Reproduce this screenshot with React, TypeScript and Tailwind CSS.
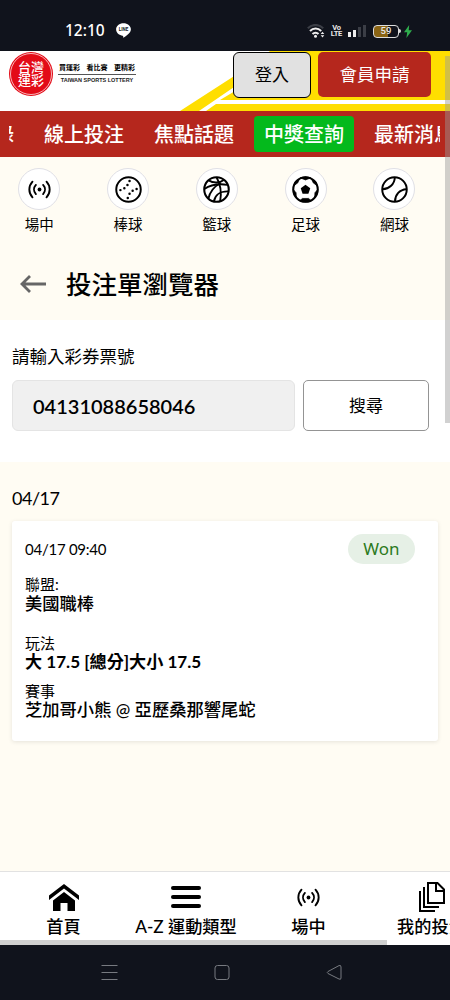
import React from 'react';

const Live: React.FC<{ className?: string }> = ({ className }) => (
  <svg viewBox="0 0 24 20" fill="none" stroke="#000" strokeWidth={2} strokeLinecap="round" className={className}>
    <circle cx="12" cy="10" r="2" fill="#000" stroke="none" />
    <path d="M8.2 5.2C5.6 8 5.6 12 8.2 14.8M15.8 5.2c2.6 2.8 2.6 6.8 0 9.6" />
    <path d="M4.6 1.8C.2 6.6 .2 13.4 4.6 18.2M19.4 1.8c4.4 4.8 4.4 11.6 0 16.4" />
  </svg>
);

const Baseball = () => (
  <svg viewBox="0 0 26 26" fill="none" stroke="#000" strokeWidth={1.9} className="size-[27px]">
    <circle cx="13" cy="13" r="11.8" />
    <path
      d="M5.2 13.6h.01M9 11.8h.01M12 8.6h.01M14 4.8h.01M20.8 12.6h.01M17 14.2h.01M14 17.2h.01M12.3 21.2h.01"
      strokeWidth={2.4}
      strokeLinecap="round"
    />
  </svg>
);

const Basketball = () => (
  <svg viewBox="0 0 26 26" fill="none" stroke="#000" strokeWidth={1.8} className="size-[27px]">
    <circle cx="13" cy="13" r="11.8" strokeWidth={2} />
    <path d="M5.5 4.2C10 7 16 6.8 20 3.8M1.3 12.5C8 8 17 7.5 23.5 8.5" />
    <path d="M13 1.2C17 8 18 16 16.5 24.5M17 6.5C11 10 6.5 15.5 5.2 21.8M10.5 24.5C11.5 18.5 16.5 14.5 24.5 14.8" />
  </svg>
);

const Soccer = () => (
  <svg viewBox="0 0 26 26" className="size-[27px]">
    <circle cx="13" cy="13" r="11.8" fill="#fff" stroke="#000" strokeWidth={2} />
    <path d="M13 8.4l4.6 3.4-1.8 5.4h-5.6l-1.8-5.4z" />
    <path
      d="M8 1.8L13 3.8l5-2L13 .8zM2 9l3.4-2.2 1.8-3.8L3 5.5zM24 9l-3.4-2.2-1.8-3.8L23 5.5zM1.2 13l2.7 3.1.2 4.2L1.6 17zM24.8 13l-2.7 3.1-.2 4.2 2.5-3.3zM7.5 23.9l2.5-2.3h6l2.5 2.3-5.5 1.2z"
      stroke="#000"
      strokeWidth={0.7}
    />
  </svg>
);

const Tennis = () => (
  <svg viewBox="0 0 26 26" fill="none" stroke="#000" strokeWidth={1.9} className="size-[27px]">
    <circle cx="13" cy="13" r="11.8" />
    <path d="M1.5 12.8C8 12.5 13 8 13.3 1.5M13.5 24.5C13.5 18 18 13 24.5 12.7" />
  </svg>
);

const sports = [
  { label: '場中', icon: <Live className="h-[19px] w-[23px]" /> },
  { label: '棒球', icon: <Baseball /> },
  { label: '籃球', icon: <Basketball /> },
  { label: '足球', icon: <Soccer /> },
  { label: '網球', icon: <Tennis /> },
];

const StatusBar = () => (
  <div className="flex h-[51px] items-end bg-[#10131c] pr-[38px] pb-[13px] pl-[65px] text-[#e8e8e8]">
    <span className="w-[39px] font-['Noto_Sans',sans-serif] text-[15.5px] leading-[16px] font-medium whitespace-nowrap text-white">12:10</span>
    <svg viewBox="0 0 14 14" className="ml-[12px] size-[15px]">
      <path d="M7 .3c3.8 0 6.9 2.5 6.9 5.6 0 3.2-3.4 5.6-6.7 7.7-.5.3-.6-.2-.5-.8.1-.8-.2-.9-.9-1C2.5 11.2.1 9 .1 5.9.1 2.8 3.2.3 7 .3z" fill="#fff" />
      <text x="7" y="7.6" textAnchor="middle" fontSize="4.2" fontWeight="700" fill="#10131c" fontFamily="Roboto, sans-serif">LINE</text>
    </svg>
    <div className="ml-auto flex items-center">
      <svg viewBox="0 0 18 14" className="h-[14px] w-[18px]" fill="none" strokeWidth={2}>
        <path d="M.8 4.2C5-.2 12-.2 16.2 4.2" stroke="#3b3e46" />
        <path d="M3 7c3.2-3.2 8-3.2 11.2 0M5.5 10c1.800-1.800 4.400-1.800 6 0" stroke="#eee" />
        <circle cx="8.5" cy="12.3" r="1.5" fill="#eee" />
        <path d="M15.5 7.8l1.8 2.2h-3.6zM15.5 13.4l1.8-2.2h-3.6z" fill="#eee" />
      </svg>
      <div className="ml-[6px] flex flex-col items-center font-['Roboto',sans-serif] text-[7.5px] leading-[6.5px] font-bold tracking-[-0.3px]">
        <span>Vo</span>
        <span>LTE</span>
      </div>
      <div className="ml-[6px] flex h-[12px] items-end gap-[2px]">
        <i className="h-[5px] w-[3px] bg-[#eee]" />
        <i className="h-[7px] w-[3px] bg-[#eee]" />
        <i className="h-[10px] w-[3px] bg-[#3b3e46]" />
        <i className="h-[12px] w-[3px] bg-[#3b3e46]" />
      </div>
      <div className="ml-[7px] flex h-[13px] w-[26px] items-center justify-center rounded-[4px] border border-[#ddd] bg-[linear-gradient(90deg,#8a6414_58%,#10131c_58%)] font-['Roboto',sans-serif] text-[9.5px] leading-none font-medium">59</div>
      <i className="h-[4px] w-[2px] rounded-r bg-[#ddd]" />
      <svg viewBox="0 0 8 13" className="ml-[3px] h-[13px] w-[8px]" fill="#2fae4d">
        <path d="M5.2 0L0 7.3h3.2L2.4 13 8 5.3H4.7z" />
      </svg>
    </div>
  </div>
);

const Header = () => (
  <header className="relative flex h-[60px] items-start bg-white">
    <svg viewBox="0 0 450 60" className="absolute inset-0 h-[60px] w-[450px]">
      <path d="M180 60L242 20 270 0H450V60z" fill="#ffde00" />
      <path d="M199 60L240 32V37L220 49H450V53H216L206 60z" fill="#fff" />
    </svg>
    <div className="relative mt-[1px] ml-[9px] flex size-[44px] shrink-0 items-center justify-center rounded-full bg-[#e30b17]">
      <div className="flex size-[42px] flex-col items-center justify-center rounded-full border border-white/70 text-[13px] leading-[13px] font-medium text-white">
        <span className="h-[13px]">台灣</span>
        <span className="h-[13px]">運彩</span>
      </div>
    </div>
    <div className="relative mt-[11px] ml-[5px] w-[78px] text-center text-black">
      <div className="flex justify-between border-b border-[#555] px-[1px] pb-[2px] text-[7px] leading-[10px] font-bold">
        <span>買運彩</span>
        <span>看比賽</span>
        <span>更精彩</span>
      </div>
      <div className="mt-[1px] font-['Liberation_Sans',sans-serif] text-[5.5px] leading-[8px] font-bold whitespace-nowrap text-[#222]">TAIWAN SPORTS LOTTERY</div>
    </div>
    <button className="relative mt-[1px] ml-auto h-[46px] w-[78px] rounded-[6px] border border-black bg-[#e1e1e1] text-[17px]">登入</button>
    <button className="relative mt-[1px] mr-[19px] ml-[7px] h-[45px] w-[113px] rounded-[5px] bg-[#b5271d] pt-[2px] text-[17.5px] text-white">會員申請</button>
  </header>
);

const NavBar = () => (
  <nav className="h-[46px] bg-[#b5271d] pr-[10px] pl-[9px]">
    <div className="flex h-full items-center overflow-hidden">
      <div className="-ml-[15px] flex shrink-0 items-center gap-[10px] text-[20px] leading-[36px] font-medium whitespace-nowrap text-white">
        <span>錄</span>
        <span className="ml-[10px] px-[10px]">線上投注</span>
        <span className="px-[10px]">焦點話題</span>
        <span className="h-[36px] rounded-[4px] bg-[#04b91c] px-[10px]">中獎查詢</span>
        <span className="px-[10px]">最新消息</span>
      </div>
    </div>
  </nav>
);

const BetCard = () => (
  <div className="mx-[12px] h-[220px] rounded-[3px] bg-white px-[13px] pt-[13px] shadow-[0_1px_4px_rgba(0,0,0,0.1)]">
    <div className="flex h-[30px] items-center justify-between pr-[10px]">
      <span className="text-[15px] tracking-[-0.25px]">04/17 09:40</span>
      <span className="h-[30px] w-[67px] rounded-full bg-[#e6f0e6] text-center font-['Noto_Sans',sans-serif] text-[17px] leading-[30px] text-[#2c7a1c]">Won</span>
    </div>
    <p className="mt-[10px] text-[15px] leading-[20px]">聯盟:</p>
    <p className="text-[17.3px] leading-[19px] font-medium">美國職棒</p>
    <p className="mt-[20px] text-[15px] leading-[20px]">玩法</p>
    <p className="text-[17.1px] leading-[18px] font-bold">大 17.5 [總分]大小 17.5</p>
    <p className="mt-[11px] text-[15px] leading-[18px]">賽事</p>
    <p className="text-[17.3px] leading-[20px] font-medium">芝加哥小熊 @ 亞歷桑那響尾蛇</p>
  </div>
);

const BottomNav = () => (
  <footer className="relative h-[74px] overflow-hidden border-t border-[#e2e2e2] bg-white">
    <div className="flex w-[492px] text-[17.2px] leading-[22px] font-medium whitespace-nowrap">
      <div className="flex w-[127px] shrink-0 flex-col items-center pt-[8px]">
        <div className="mb-[2px] flex h-[34px] items-center">
          <svg viewBox="0 0 30 27" className="h-[27px] w-[30px]">
            <path d="M0 11.5L15 0l15 11.5V16L15 4.5 0 16z" />
            <path d="M4 16.5L15 8l11 8.5V27h-7.5v-8h-7v8H4z" />
          </svg>
        </div>
        首頁
      </div>
      <div className="flex w-[118px] shrink-0 flex-col items-center pt-[8px]">
        <div className="mb-[2px] flex h-[34px] flex-col items-center justify-center gap-[5px]">
          <i className="h-[4px] w-[30px] rounded-full bg-black" />
          <i className="h-[4px] w-[30px] rounded-full bg-black" />
          <i className="h-[4px] w-[30px] rounded-full bg-black" />
        </div>
        A-Z 運動類型
      </div>
      <div className="flex w-[127px] shrink-0 flex-col items-center pt-[8px]">
        <div className="mb-[2px] flex h-[34px] items-center">
          <Live className="h-[19px] w-[23px]" />
        </div>
        場中
      </div>
      <div className="flex w-[119px] shrink-0 flex-col items-center pt-[8px]">
        <div className="mb-[2px] flex h-[34px] items-center">
          <svg viewBox="0 0 26 30" className="h-[30px] w-[26px]" fill="none" stroke="#000" strokeWidth={2}>
            <path d="M9 1h9.5L25 7.5V21H9zM17 1v8h8M5 5v20h15M1 9v20h15" />
          </svg>
        </div>
        我的投注
      </div>
    </div>
    <div className="absolute bottom-0 left-0 h-[5px] w-[387px] bg-[#d0d0d0]" />
  </footer>
);

const App: React.FC = () => (
  <div className="relative h-[1000px] w-[450px] overflow-hidden bg-[#fffcf3] font-['Lato','Noto_Sans_CJK_TC',sans-serif] text-black">
    <StatusBar />
    <Header />
    <NavBar />

    <div className="h-[163px]">
      <div className="-ml-[5.2px] flex pt-[11px]">
        {sports.map((s) => (
          <div key={s.label} className="flex w-[88.8px] shrink-0 flex-col items-center">
            <div className="flex size-[42px] items-center justify-center rounded-full border border-[#e0e0e6] bg-white">{s.icon}</div>
            <span className="mt-[5px] text-[14.5px] leading-[20px]">{s.label}</span>
          </div>
        ))}
      </div>
      <div className="mt-[29px] flex h-[40px] items-center pl-[20px]">
        <svg viewBox="0 0 26 18" className="h-[18px] w-[26px]" fill="none" stroke="#666" strokeWidth={2.8}>
          <path d="M26 9H2M10 1L2 9l8 8" />
        </svg>
        <h1 className="ml-[20px] text-[25.5px] font-medium">投注單瀏覽器</h1>
      </div>
    </div>

    <section className="h-[142px] bg-white px-[12px] pt-[25px]">
      <label className="block text-[17.5px] leading-[24px]">請輸入彩券票號</label>
      <div className="mt-[11px] flex gap-[8px]">
        <div className="flex h-[51px] w-[283px] items-center rounded-[6px] border border-[#e4e4e4] bg-[#f0f0f0] pl-[20px] text-[20px] font-semibold">04131088658046</div>
        <button className="h-[51px] w-[126px] rounded-[5px] border border-[#949494] bg-white pt-[1px] text-[17px]">搜尋</button>
      </div>
    </section>

    <main className="h-[409px] pt-[24px]">
      <h2 className="mb-[11px] pl-[12px] text-[18px] leading-[24px] tracking-[-0.5px]">04/17</h2>
      <BetCard />
    </main>

    <BottomNav />

    <div className="flex h-[55px] items-center bg-[#10131c]">
      <svg viewBox="0 0 450 55" className="h-[55px] w-[450px]" fill="none" stroke="#777a80" strokeWidth={1}>
        <path d="M101.5 20.5h16M101.5 27.5h16M101.5 34.5h16" />
        <rect x="215" y="20.5" width="14" height="14" rx="2.5" />
        <path d="M328 26.5L339 20.6Q341 19.8 341 22V33Q341 35 339 34L328 28.5Q326.5 27.5 328 26.5z" />
      </svg>
    </div>

    {/* page scrollbar */}
    <div className="absolute top-[56px] left-[445px] h-[367px] w-[5px] bg-[#999]/45" />
  </div>
);

export default App;
